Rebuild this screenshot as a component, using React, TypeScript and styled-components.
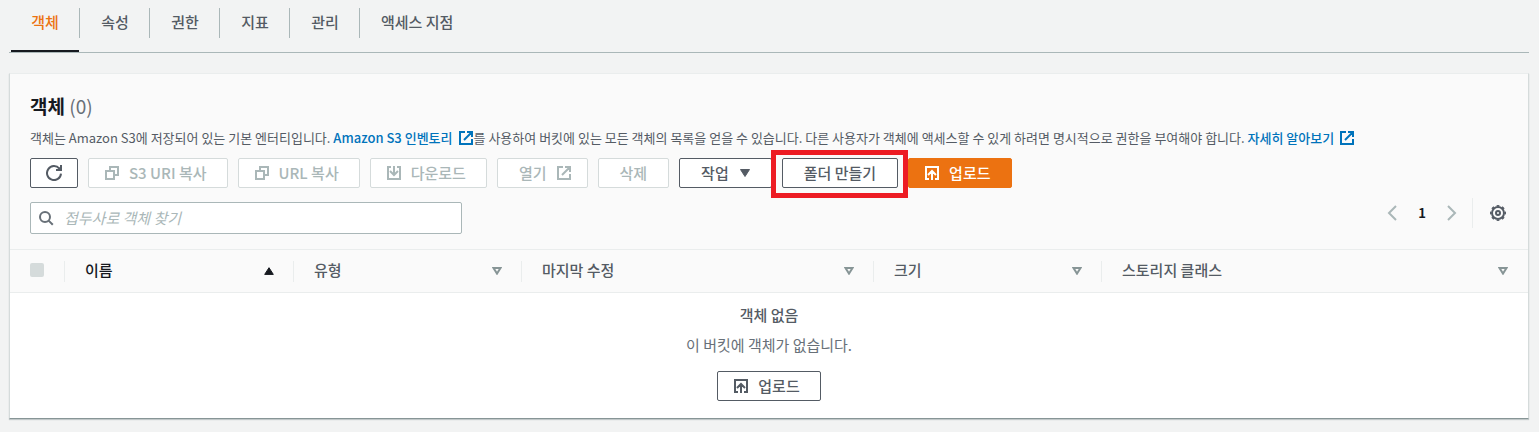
import React from 'react';
import styled, { createGlobalStyle, css } from 'styled-components';

const ink = '#16191f';
const slate = '#545b64';
const muted = '#aab7b8';
const rule = '#eaeded';
const link = '#0073bb';
const orange = '#ec7211';

const GlobalStyle = createGlobalStyle`
  *, *::before, *::after { box-sizing: border-box; }
  body {
    margin: 0;
    background: #f2f3f3;
    color: ${slate};
    font-family: 'Noto Sans CJK KR', 'Noto Sans', sans-serif;
    font-size: 15px;
    line-height: 20px;
  }
  button, input { font: inherit; }
`;

const Page = styled.main`
  padding: 0 10px 13px 9px;
`;

const TabBar = styled.nav`
  display: flex;
  height: 53px;
  padding-left: 1px;
  border-bottom: 1px solid ${muted};
`;

const Tab = styled.button<{ $active?: boolean }>`
  position: relative;
  display: flex;
  align-items: flex-start;
  justify-content: center;
  min-width: 70px;
  height: 52px;
  padding: 12px 21px 0;
  border: 0;
  background: none;
  color: ${p => (p.$active ? orange : slate)};
  font-weight: 500;
  white-space: nowrap;

  &:not(:last-child)::after {
    content: '';
    position: absolute;
    top: 8px;
    right: 0;
    width: 1px;
    height: 30px;
    background: ${muted};
  }

  ${p =>
    p.$active &&
    css`
      &::before {
        content: '';
        position: absolute;
        left: 1px;
        right: 1px;
        bottom: 0;
        height: 2px;
        background: ${ink};
      }
    `}
`;

const Panel = styled.section`
  margin-top: 20px;
  border: 1px solid #d5dbdb;
  border-top-color: ${rule};
  border-bottom-color: #879596;
  background: #fff;
  box-shadow: 0 1px 1px rgba(0, 28, 36, 0.2);
`;

const PanelHeader = styled.header`
  padding: 19px 20px 15px;
  background: #fafafa;
`;

const Title = styled.h2`
  margin: 0;
  color: ${ink};
  font-size: 19px;
  line-height: 26px;
  font-weight: 700;
`;

const Count = styled.span`
  color: #687078;
  font-weight: 400;
`;

const Description = styled.p`
  margin: 9px 0 0;
  font-size: 13px;
  line-height: 20px;
`;

const TextLink = styled.a`
  color: ${link};
  font-weight: 500;
  text-decoration: none;

  svg {
    margin-left: 5px;
    vertical-align: -3px;
  }
`;

const Toolbar = styled.div`
  display: flex;
  flex-wrap: wrap;
  gap: 10px;
  margin-top: 10px;
`;

const buttonPadding = {
  none: '0 21px',
  start: '0 20px 0 15px',
  end: '0 15px 0 21px',
  only: '0 15px',
};

const Button = styled.button<{ $primary?: boolean; $icon?: keyof typeof buttonPadding }>`
  position: relative;
  display: inline-flex;
  align-items: center;
  justify-content: center;
  gap: 9px;
  height: 30px;
  padding: ${p => buttonPadding[p.$icon ?? 'none']};
  border: 1px solid ${p => (p.$primary ? orange : slate)};
  border-radius: 2px;
  background: ${p => (p.$primary ? orange : '#fff')};
  color: ${p => (p.$primary ? '#fff' : slate)};
  font-weight: 500;
  white-space: nowrap;

  &:disabled {
    border-color: #d5dbdb;
    color: ${muted};
  }
`;

const Highlight = styled.span`
  position: absolute;
  inset: -9px -11px -11px -12px;
  border: 5px solid #ed1c24;
  pointer-events: none;
`;

const FilterRow = styled.div`
  display: flex;
  justify-content: space-between;
  margin-top: 10px;
`;

const SearchBox = styled.label`
  display: flex;
  align-items: center;
  gap: 10px;
  width: 432px;
  height: 32px;
  margin-top: 4px;
  padding: 0 7px;
  border: 1px solid ${muted};
  border-radius: 2px;
  background: #fff;
  color: #687078;
`;

const SearchInput = styled.input`
  flex: 1;
  min-width: 0;
  padding: 0;
  border: 0;
  outline: 0;
  background: none;
  color: ${ink};

  &::placeholder {
    color: ${muted};
    font-style: italic;
    opacity: 1;
  }
`;

const Pager = styled.div`
  display: flex;
  align-items: center;
  height: 30px;
`;

const PagerButton = styled.button`
  display: flex;
  align-items: center;
  justify-content: center;
  width: 30px;
  height: 30px;
  padding: 0;
  border: 0;
  background: none;
  color: ${p => (p.disabled ? muted : slate)};
`;

const PageNumber = styled.button`
  width: 30px;
  padding: 0;
  border: 0;
  background: none;
  color: ${ink};
  font-size: 13px;
  font-weight: 700;
`;

const Preferences = styled.div`
  display: flex;
  justify-content: flex-end;
  width: 36px;
  margin-left: 5px;
  border-left: 1px solid ${rule};

  ${PagerButton} {
    width: 18px;
    margin-right: 1px;
  }
`;

const Table = styled.table`
  width: 100%;
  table-layout: fixed;
  border-collapse: collapse;
`;

const HeadCell = styled.th<{ $sorted?: boolean }>`
  position: relative;
  height: 43px;
  padding: 0 20px 2px;
  border-top: 1px solid ${rule};
  border-bottom: 1px solid ${rule};
  background: #fafafa;
  color: ${p => (p.$sorted ? ink : slate)};
  font-weight: 500;
  text-align: left;

  &:not(:last-child)::after {
    content: '';
    position: absolute;
    top: 11px;
    right: 0;
    width: 1px;
    height: 21px;
    background: ${rule};
  }
`;

const HeadContent = styled.div`
  display: flex;
  align-items: center;
  justify-content: space-between;

  svg {
    margin-top: 2px;
  }
`;

const Checkbox = styled.input`
  appearance: none;
  display: block;
  width: 14px;
  height: 14px;
  margin: 0;
  border-radius: 2px;
  background: #d5dbdb;
`;

const EmptyCell = styled.td`
  padding: 12px 20px 17px;
  text-align: center;
`;

const EmptyTitle = styled.strong`
  display: block;
  font-weight: 500;
`;

const EmptyText = styled.p`
  margin: 10px 0 16px;
  color: #687078;
`;

const Icon = ({ children }: { children: React.ReactNode }) => (
  <svg width="16" height="16" viewBox="0 0 16 16" fill="none" stroke="currentColor" strokeWidth="2" aria-hidden="true">
    {children}
  </svg>
);

const RefreshIcon = () => (
  <Icon>
    <path d="M15 8.6a7 7 0 1 1-1.6-5" />
    <path d="M10 5h5V0" />
    <path d="M13 2.5h2V5h-2z" fill="currentColor" stroke="none" />
  </Icon>
);

const CopyIcon = () => (
  <Icon>
    <path d="M2 6h8v8H2z" />
    <path d="M6 6V2h8v8h-4" />
  </Icon>
);

const DownloadIcon = () => (
  <Icon>
    <path d="M5 2H2v12h12V2h-3M8 1v9M4 6l4 4 4-4" />
  </Icon>
);

const UploadIcon = () => (
  <Icon>
    <path d="M5 14H2V2h12v12h-3M8 15V6M4 10l4-4 4 4" />
  </Icon>
);

const ExternalIcon = () => (
  <Icon>
    <path d="M7 2H2v12h12V9M9 2h5v5M14 2l-8 8" />
  </Icon>
);

const SearchIcon = () => (
  <Icon>
    <circle cx="7" cy="7" r="5" />
    <path d="M10.6 10.6l4.2 4.2" />
  </Icon>
);

const ChevronIcon = ({ right }: { right?: boolean }) => (
  <Icon>
    <path d={right ? 'M4 1l7 7-7 7' : 'M12 1L5 8l7 7'} />
  </Icon>
);

const GearIcon = () => (
  <Icon>
    <circle cx="8" cy="8" r="6" />
    <circle cx="8" cy="8" r="7.3" strokeWidth="1.4" pathLength="16" strokeDasharray="1" strokeDashoffset="0.5" />
    <circle cx="8" cy="8" r="2" />
  </Icon>
);

const CaretDown = () => (
  <svg width="12" height="8" viewBox="0 0 12 8" aria-hidden="true">
    <path d="M2.5.5h9L7 7.5z" fill="currentColor" stroke="currentColor" strokeLinejoin="round" />
  </svg>
);

const SortUp = () => (
  <svg width="10" height="8" viewBox="0 0 10 8" aria-hidden="true">
    <path d="M5 .7L9.3 7.4H.7z" fill="currentColor" stroke="currentColor" strokeLinejoin="round" />
  </svg>
);

const SortDown = () => (
  <svg width="10" height="8" viewBox="0 0 10 8" aria-hidden="true">
    <path d="M1.5 1h7L5 6.6z" fill="none" stroke="#879596" strokeWidth="2" />
  </svg>
);

const tabs = ['객체', '속성', '권한', '지표', '관리', '액세스 지점'];

const columns = [
  { label: '이름', sorted: true },
  { label: '유형' },
  { label: '마지막 수정' },
  { label: '크기' },
  { label: '스토리지 클래스' },
];

export default function App() {
  return (
    <>
      <GlobalStyle />
      <Page>
        <TabBar>
          {tabs.map((tab, i) => (
            <Tab key={tab} type="button" $active={i === 0}>
              {tab}
            </Tab>
          ))}
        </TabBar>
        <Panel>
          <PanelHeader>
            <Title>
              객체 <Count>(0)</Count>
            </Title>
            <Description>
              객체는 Amazon S3에 저장되어 있는 기본 엔터티입니다.{' '}
              <TextLink href="#inventory">
                Amazon S3 인벤토리
                <ExternalIcon />
              </TextLink>
              를 사용하여 버킷에 있는 모든 객체의 목록을 얻을 수 있습니다. 다른 사용자가 객체에 액세스할 수 있게 하려면 명시적으로 권한을 부여해야 합니다.{' '}
              <TextLink href="#learn-more">
                자세히 알아보기
                <ExternalIcon />
              </TextLink>
            </Description>
            <Toolbar>
              <Button type="button" $icon="only" aria-label="새로 고침">
                <RefreshIcon />
              </Button>
              <Button type="button" $icon="start" disabled>
                <CopyIcon />
                S3 URI 복사
              </Button>
              <Button type="button" $icon="start" disabled>
                <CopyIcon />
                URL 복사
              </Button>
              <Button type="button" $icon="start" disabled>
                <DownloadIcon />
                다운로드
              </Button>
              <Button type="button" $icon="end" disabled>
                열기
                <ExternalIcon />
              </Button>
              <Button type="button" disabled>
                삭제
              </Button>
              <Button type="button">
                작업
                <CaretDown />
              </Button>
              <Button type="button">
                폴더 만들기
                <Highlight />
              </Button>
              <Button type="button" $icon="start" $primary>
                <UploadIcon />
                업로드
              </Button>
            </Toolbar>
            <FilterRow>
              <SearchBox>
                <SearchIcon />
                <SearchInput type="text" aria-label="객체 찾기" placeholder="접두사로 객체 찾기" />
              </SearchBox>
              <Pager>
                <PagerButton type="button" disabled aria-label="이전 페이지">
                  <ChevronIcon />
                </PagerButton>
                <PageNumber type="button">1</PageNumber>
                <PagerButton type="button" disabled aria-label="다음 페이지">
                  <ChevronIcon right />
                </PagerButton>
                <Preferences>
                  <PagerButton type="button" aria-label="기본 설정">
                    <GearIcon />
                  </PagerButton>
                </Preferences>
              </Pager>
            </FilterRow>
          </PanelHeader>
          <Table>
            <colgroup>
              <col width="55" />
              <col width="229" />
              <col width="228" />
              <col width="352" />
              <col width="228" />
              <col />
            </colgroup>
            <thead>
              <tr>
                <HeadCell>
                  <Checkbox type="checkbox" disabled aria-label="모두 선택" />
                </HeadCell>
                {columns.map(column => (
                  <HeadCell key={column.label} $sorted={column.sorted}>
                    <HeadContent>
                      {column.label}
                      {column.sorted ? <SortUp /> : <SortDown />}
                    </HeadContent>
                  </HeadCell>
                ))}
              </tr>
            </thead>
            <tbody>
              <tr>
                <EmptyCell colSpan={6}>
                  <EmptyTitle>객체 없음</EmptyTitle>
                  <EmptyText>이 버킷에 객체가 없습니다.</EmptyText>
                  <Button type="button" $icon="start">
                    <UploadIcon />
                    업로드
                  </Button>
                </EmptyCell>
              </tr>
            </tbody>
          </Table>
        </Panel>
      </Page>
    </>
  );
}
